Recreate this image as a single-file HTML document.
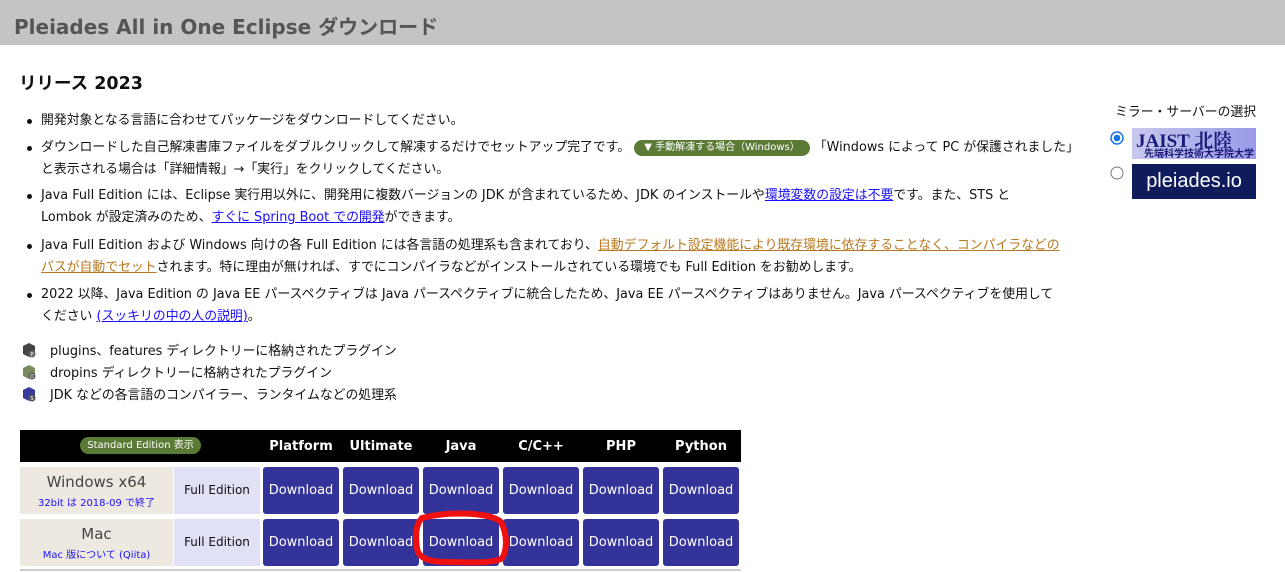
<!DOCTYPE html>
<html><head><meta charset="utf-8"><style>
*{margin:0;padding:0;box-sizing:border-box}
body{width:1285px;height:573px;overflow:hidden;background:#fff;font-family:"DejaVu Sans","Noto Sans CJK JP",sans-serif;font-size:12.85px;color:#111;position:relative}
.hdr{position:absolute;left:0;top:0;width:1285px;height:45px;background:#c4c4c4}
.hdr span{position:absolute;left:14px;top:11px;font-size:20px;font-weight:bold;color:#555;white-space:nowrap}
h2{position:absolute;left:19px;top:70px;font-size:17.5px;font-weight:bold;white-space:nowrap}
.t{position:absolute;white-space:nowrap;line-height:22px}
.b::before{content:"";position:absolute;left:-14px;top:9px;width:5px;height:5px;border-radius:50%;background:#111}
a{color:#1a0dff;text-decoration:underline}
a.o{color:#b7791f}
.pill{display:inline-block;background:#5b7a35;color:#fff;border-radius:9px;padding:0 10px;font-size:10px;line-height:16px;vertical-align:1px}
.ic{position:absolute;left:22px;width:14px;height:15px}
.head{position:absolute;left:20px;top:430px;width:721px;height:32px;background:#000}
.hc{position:absolute;top:439px;color:#fff;font-weight:bold;font-size:13px;width:76px;text-align:center;font-family:"DejaVu Sans",sans-serif}
.lab{position:absolute;left:20px;width:153px;height:47px;background:#ede9e1;text-align:center}
.lab .m{font-size:15px;color:#444;margin-top:6px}
.lab .s{font-size:10px;color:#1a0dff;margin-top:3px}
.ed{position:absolute;left:174px;width:86px;height:47px;background:#e0e0f6;text-align:center;line-height:47px;font-size:12px}
.btn{position:absolute;width:76px;height:47px;background:#333399;color:#fff;border-radius:3px;text-align:center;line-height:47px;font-size:13px}
</style></head><body>
<div class="hdr"><span>Pleiades All in One Eclipse ダウンロード</span></div>
<h2>リリース 2023</h2>

<div class="t b" style="left:41px;top:110px">開発対象となる言語に合わせてパッケージをダウンロードしてください。</div>
<div class="t b" style="left:41px;top:137px">ダウンロードした自己解凍書庫ファイルをダブルクリックして解凍するだけでセットアップ完了です。 <span class="pill">▼ 手動解凍する場合（Windows）</span> 「Windows によって PC が保護されました」<br>と表示される場合は「詳細情報」→「実行」をクリックしてください。</div>
<div class="t b" style="left:41px;top:185px">Java Full Edition には、Eclipse 実行用以外に、開発用に複数バージョンの JDK が含まれているため、JDK のインストールや<a>環境変数の設定は不要</a>です。また、STS と<br>Lombok が設定済みのため、<a>すぐに Spring Boot での開発</a>ができます。</div>
<div class="t b" style="left:41px;top:235px">Java Full Edition および Windows 向けの各 Full Edition には各言語の処理系も含まれており、<a class="o">自動デフォルト設定機能により既存環境に依存することなく、コンパイラなどの</a><br><a class="o">パスが自動でセット</a>されます。特に理由が無ければ、すでにコンパイラなどがインストールされている環境でも Full Edition をお勧めします。</div>
<div class="t b" style="left:41px;top:284px">2022 以降、Java Edition の Java EE パースペクティブは Java パースペクティブに統合したため、Java EE パースペクティブはありません。Java パースペクティブを使用して<br>ください <a>(スッキリの中の人の説明)</a>。</div>

<svg class="ic" style="top:343px" viewBox="0 0 14 15"><path d="M7 0L13 3V11L7 14L1 11V3Z" fill="#444"/><circle cx="10" cy="11" r="3.5" fill="#666"/><text x="10" y="13" font-size="5" fill="#fff" text-anchor="middle">P</text></svg>
<div class="t" style="left:50px;top:341px">plugins、features ディレクトリーに格納されたプラグイン</div>
<svg class="ic" style="top:365px" viewBox="0 0 14 15"><path d="M7 0L13 3V11L7 14L1 11V3Z" fill="#7a8c5c"/><circle cx="10" cy="11" r="3.5" fill="#555"/><text x="10" y="13" font-size="5" fill="#fff" text-anchor="middle">D</text></svg>
<div class="t" style="left:50px;top:363px">dropins ディレクトリーに格納されたプラグイン</div>
<svg class="ic" style="top:387px" viewBox="0 0 14 15"><path d="M7 0L13 3V11L7 14L1 11V3Z" fill="#3a3a9a"/><circle cx="10" cy="11" r="3.5" fill="#555"/><text x="10" y="13" font-size="5" fill="#fff" text-anchor="middle">S</text></svg>
<div class="t" style="left:50px;top:385px">JDK などの各言語のコンパイラー、ランタイムなどの処理系</div>

<div class="head"></div>
<div style="position:absolute;left:80px;top:437px;width:121px;height:17px;border-radius:9px;background:#5b7a35;color:#fff;font-size:10px;line-height:17px;text-align:center">Standard Edition 表示</div>
<div class="hc" style="left:263px">Platform</div>
<div class="hc" style="left:343px">Ultimate</div>
<div class="hc" style="left:423px">Java</div>
<div class="hc" style="left:503px">C/C++</div>
<div class="hc" style="left:583px">PHP</div>
<div class="hc" style="left:663px">Python</div>

<div class="lab" style="top:467px"><div class="m">Windows x64</div><div class="s">32bit は 2018-09 で終了</div></div>
<div class="ed" style="top:467px">Full Edition</div>
<div class="lab" style="top:519px"><div class="m">Mac</div><div class="s">Mac 版について (Qiita)</div></div>
<div class="ed" style="top:519px">Full Edition</div>

<div class="btn" style="left:263px;top:467px">Download</div><div class="btn" style="left:343px;top:467px">Download</div><div class="btn" style="left:423px;top:467px">Download</div><div class="btn" style="left:503px;top:467px">Download</div><div class="btn" style="left:583px;top:467px">Download</div><div class="btn" style="left:663px;top:467px">Download</div>
<div class="btn" style="left:263px;top:519px">Download</div><div class="btn" style="left:343px;top:519px">Download</div><div class="btn" style="left:423px;top:519px">Download</div><div class="btn" style="left:503px;top:519px">Download</div><div class="btn" style="left:583px;top:519px">Download</div><div class="btn" style="left:663px;top:519px">Download</div>
<div style="position:absolute;left:20px;top:569px;width:721px;height:2px;background:#ccc"></div>
<svg style="position:absolute;left:408px;top:508px" width="102" height="62"><path d="M14 10C40 3 82 4 93 14C101 30 98 46 93 51C80 56 60 54 40 54C20 54 10 50 9 40C7 26 8 16 14 10Z" fill="none" stroke="#f01010" stroke-width="6"/></svg>

<div class="t" style="left:1115px;top:102px">ミラー・サーバーの選択</div>
<svg style="position:absolute;left:1110px;top:131px" width="14" height="14"><circle cx="7" cy="7" r="6" fill="#fff" stroke="#1a73e8" stroke-width="1.5"/><circle cx="7" cy="7" r="3.3" fill="#1a73e8"/></svg>
<svg style="position:absolute;left:1110px;top:166px" width="14" height="14"><circle cx="7" cy="7" r="6" fill="#fff" stroke="#777" stroke-width="1"/></svg>
<div style="position:absolute;left:1132px;top:128px;width:124px;height:31px;background:linear-gradient(90deg,#c8c8ee,#9a9ae8);color:#1a1a7a;font-family:'Liberation Serif','Noto Serif CJK SC',serif;font-weight:bold">
<div style="position:absolute;left:4px;top:-2px;font-size:19px;white-space:nowrap">JAIST 北陸</div>
<div style="position:absolute;left:12px;top:17px;font-size:10px;white-space:nowrap;font-family:'Noto Sans CJK JP',sans-serif">先端科学技術大学院大学</div></div>
<div style="position:absolute;left:1132px;top:164px;width:124px;height:35px;background:#0f1c5c;color:#fff;font-family:'Liberation Sans',sans-serif;font-size:20px;text-align:center;line-height:34px">pleiades.io</div>
</body></html>
